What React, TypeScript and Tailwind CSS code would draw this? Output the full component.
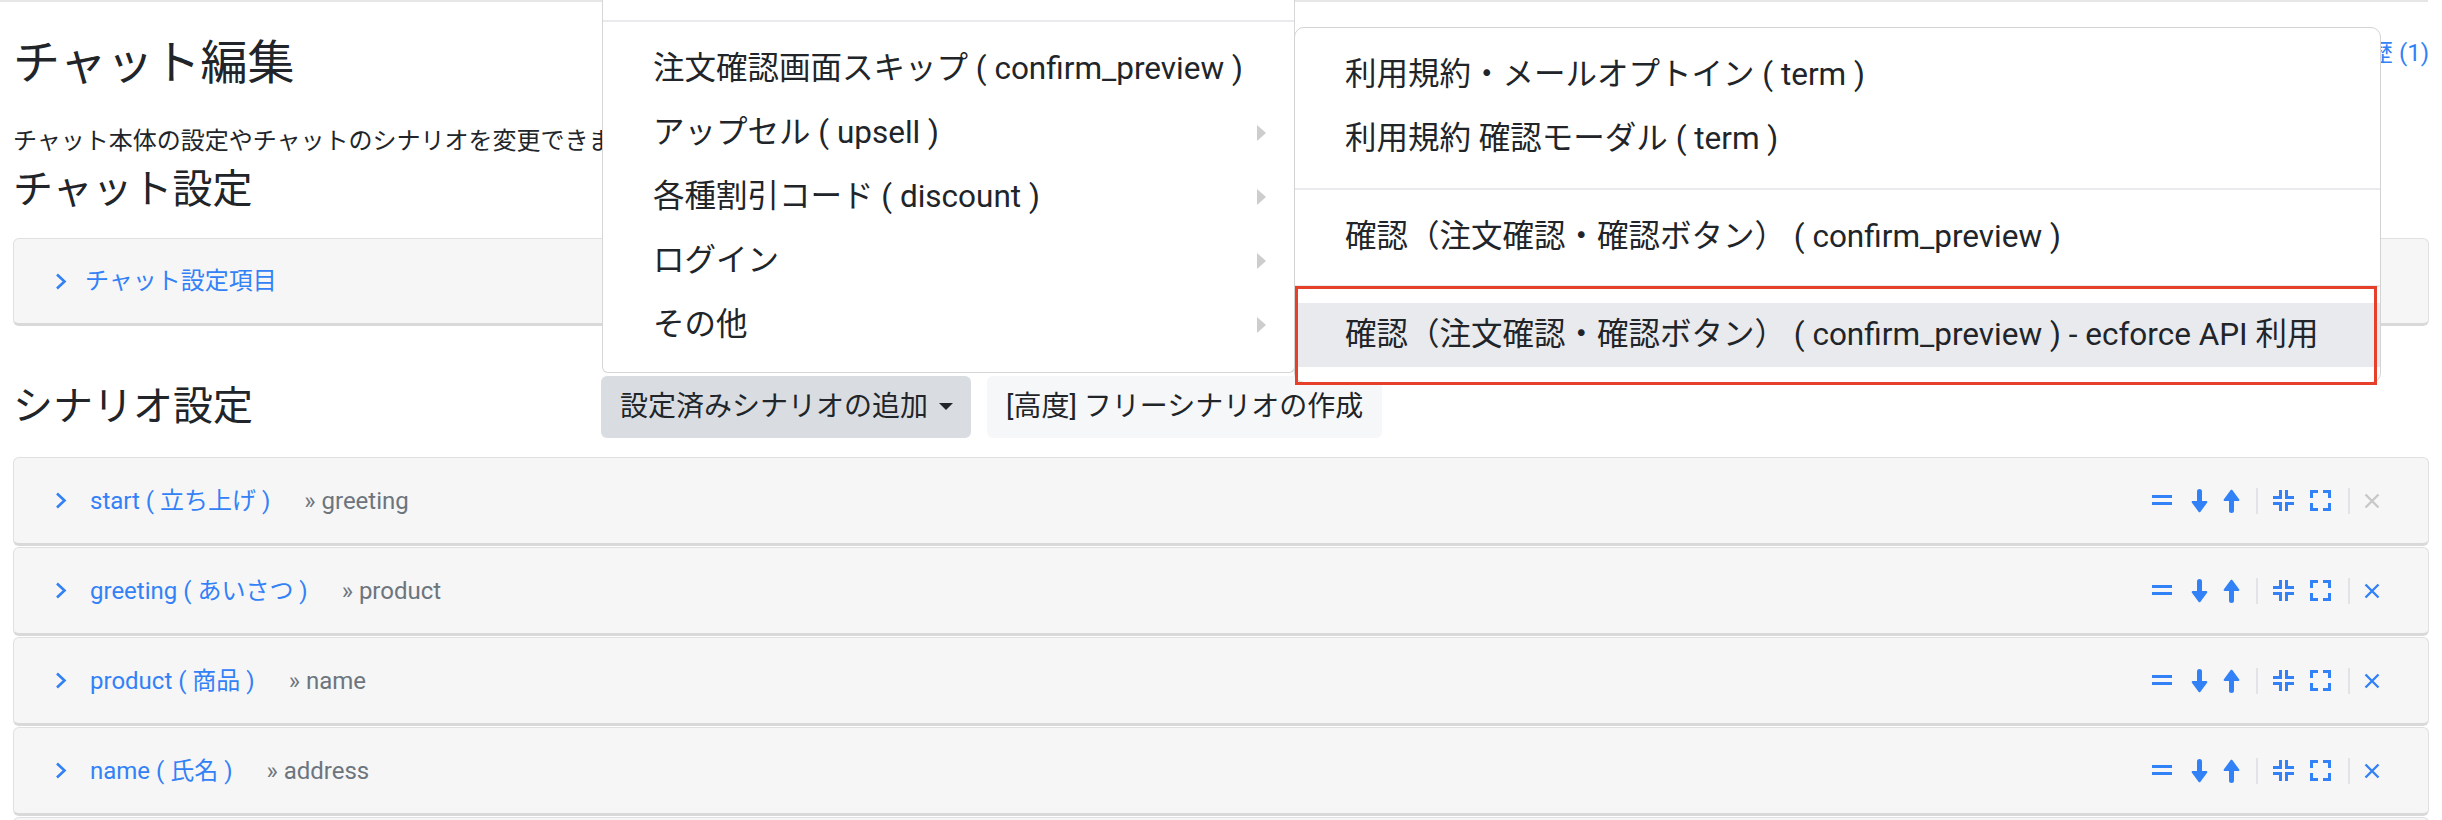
import React from 'react';

const blue = 'text-[#3381f6]';

const Chevron = () => (
  <svg width="12" height="17" viewBox="0 0 12 17" className={`shrink-0 ${blue}`}>
    <polyline points="2,1.5 9.5,8.5 2,15.5" fill="none" stroke="currentColor" strokeWidth="2.6" />
  </svg>
);

const Equals = () => (
  <svg width="20" height="11" viewBox="0 0 20 11" className="fill-current">
    <rect x="0" y="0" width="20" height="3" />
    <rect x="0" y="7" width="20" height="3" />
  </svg>
);

const ArrowDown = ({ up = false }: { up?: boolean }) => (
  <svg width="17" height="24" viewBox="0 0 17 24" className={`fill-current ${up ? 'rotate-180' : ''}`}>
    <path d="M6 2.5a2.5 2.5 0 0 1 5 0V12h4.3c.9 0 1.4 1.1.8 1.8l-6.8 9.1c-.4.5-1.2.5-1.6 0L.9 13.8C.3 13.1.8 12 1.7 12H6z" />
  </svg>
);

const Compress = () => (
  <svg width="21" height="21" viewBox="0 0 21 21" fill="none" stroke="currentColor" strokeWidth="3">
    <path d="M0 7.5H7.5V0" />
    <path d="M13.5 0V7.5H21" />
    <path d="M0 13.5H7.5V21" />
    <path d="M21 13.5H13.5V21" />
  </svg>
);

const Expand = () => (
  <svg width="21" height="21" viewBox="0 0 21 21" fill="none" stroke="currentColor" strokeWidth="3">
    <path d="M1.5 8V1.5H8" />
    <path d="M13 1.5H19.5V8" />
    <path d="M1.5 13V19.5H8" />
    <path d="M19.5 13V19.5H13" />
  </svg>
);

const Close = () => (
  <svg width="16" height="16" viewBox="0 0 16 16" fill="none" stroke="currentColor" strokeWidth="2.4">
    <path d="M1.5 1.5L14.5 14.5M14.5 1.5L1.5 14.5" />
  </svg>
);

const Sep = () => <div className="w-[2px] h-[26px] bg-[#e1e3e7]" />;

const scenarios = [
  { name: 'start ( 立ち上げ )', next: 'greeting', removable: false },
  { name: 'greeting ( あいさつ )', next: 'product', removable: true },
  { name: 'product ( 商品 )', next: 'name', removable: true },
  { name: 'name ( 氏名 )', next: 'address', removable: true },
];

const menuItems = [
  { label: '注文確認画面スキップ ( confirm_preview )', sub: false },
  { label: 'アップセル ( upsell )', sub: true },
  { label: '各種割引コード ( discount )', sub: true },
  { label: 'ログイン', sub: true },
  { label: 'その他', sub: true },
];

const rowClass =
  'h-[89px] flex items-center pl-[41px] pr-[48px] bg-[#f6f6f6] border border-[#e0e0e0] border-b-[3px] border-b-[#d9d9d9] rounded-[6px] text-[24px]';

export default function App() {
  return (
    <div className="relative h-[820px] overflow-hidden bg-white text-[#212529] font-[Roboto,'Noto_Sans_CJK_JP',sans-serif]">
      <div className="h-[2px] w-[2428px] bg-[#e6e6e6]" />

      <div className="px-[13px]">
        {/* Header */}
        <div className="flex items-start justify-between pt-[33px]">
          <h1 className="text-[47px] leading-[56px] font-normal">チャット編集</h1>
          <a className={`text-[24px] leading-[36px] ${blue}`}>変更履歴 (1)</a>
        </div>
        <p className="mt-8 text-[24px] leading-[36px]">チャット本体の設定やチャットのシナリオを変更できます。</p>

        <h2 className="mt-[7px] text-[40px] leading-[48px] font-normal">チャット設定</h2>
        <div className="mt-6 h-[88px] flex items-center pl-[41px] bg-[#f6f6f6] border border-[#e0e0e0] border-b-[3px] border-b-[#d9d9d9] rounded-[6px]">
          <Chevron />
          <span className={`ml-[18px] text-[24px] ${blue}`}>チャット設定項目</span>
        </div>

        {/* Scenario header */}
        <div className="mt-[50px] flex items-center h-[62px]">
          <h2 className="w-[588px] text-[40px] leading-[48px] font-normal">シナリオ設定</h2>
          <button className="h-[62px] flex items-center pl-[19px] pr-[18px] bg-[#d9dde2] rounded-[6px] text-[28px]">
            設定済みシナリオの追加
            <svg width="14" height="8" viewBox="0 0 14 8" className="ml-[11px]">
              <polygon points="0,0 14,0 7,7" fill="#212529" />
            </svg>
          </button>
          <button className="ml-4 h-[62px] flex items-center px-[19px] bg-[#f6f7f9] rounded-[6px] text-[28px]">
            [高度] フリーシナリオの作成
          </button>
        </div>

        {/* Scenario rows */}
        <div className="mt-[19px] flex flex-col gap-[1px]">
          {scenarios.map((s) => (
            <div key={s.name} className={rowClass}>
              <Chevron />
              <span className={`ml-[23px] ${blue}`}>{s.name}</span>
              <span className="ml-[34px] text-[#6c757d]">» {s.next}</span>
              <div className={`ml-auto flex items-center ${blue}`}>
                <Equals />
                <span className="ml-[19px]"><ArrowDown /></span>
                <span className="ml-[15px]"><ArrowDown up /></span>
                <span className="ml-[16px]"><Sep /></span>
                <span className="ml-[15px]"><Compress /></span>
                <span className="ml-[16px]"><Expand /></span>
                <span className="ml-[17px]"><Sep /></span>
                <span className={`ml-[14px] ${s.removable ? '' : 'text-[#c8c8c8]'}`}><Close /></span>
              </div>
            </div>
          ))}
          {/* next row, only its top edge is in view */}
          <div className={rowClass} />
        </div>
      </div>

      {/* Dropdown menu */}
      <div className="absolute left-[602px] top-0 w-[693px] h-[373px] bg-white border-x border-b border-[#d6d6d6] rounded-b-[6px] z-10">
        <div className="h-[20px]" />
        <div className="h-[2px] bg-[#e9eaee]" />
        <div className="py-[15px]">
          {menuItems.map((m) => (
            <div key={m.label} className="h-[64px] flex items-center justify-between pl-[50px] pr-[28px] text-[31.5px]">
              <span>{m.label}</span>
              {m.sub && (
                <svg width="9" height="16" viewBox="0 0 9 16">
                  <polygon points="0,0 9,8 0,16" fill="#cdcdcd" />
                </svg>
              )}
            </div>
          ))}
        </div>
      </div>

      {/* Sub menu */}
      <div className="absolute left-[1294px] top-[27px] w-[1087px] h-[356px] bg-white border border-[#d3d3d3] rounded-[10px] z-20 overflow-hidden text-[31.5px]">
        <div className="pt-[15px]">
          <div className="h-[64px] flex items-center pl-[50px]">利用規約・メールオプトイン ( term )</div>
          <div className="h-[64px] flex items-center pl-[50px]">利用規約 確認モーダル ( term )</div>
        </div>
        <div className="mt-[17px] h-[2px] bg-[#e9eaee]" />
        <div className="pt-[15px]">
          <div className="h-[64px] flex items-center pl-[50px]">確認（注文確認・確認ボタン） ( confirm_preview )</div>
        </div>
        <div className="mt-[16px] h-[2px] bg-[#e9eaee]" />
        <div className="pt-[16px]">
          <div className="h-[64px] flex items-center pl-[50px] bg-[#e9eaee]">
            確認（注文確認・確認ボタン） ( confirm_preview ) - ecforce API 利用
          </div>
        </div>
      </div>

      {/* Highlight box */}
      <div className="absolute left-[1295px] top-[286px] w-[1082px] h-[99px] border-[3px] border-[#e6402b] z-30" />
    </div>
  );
}
